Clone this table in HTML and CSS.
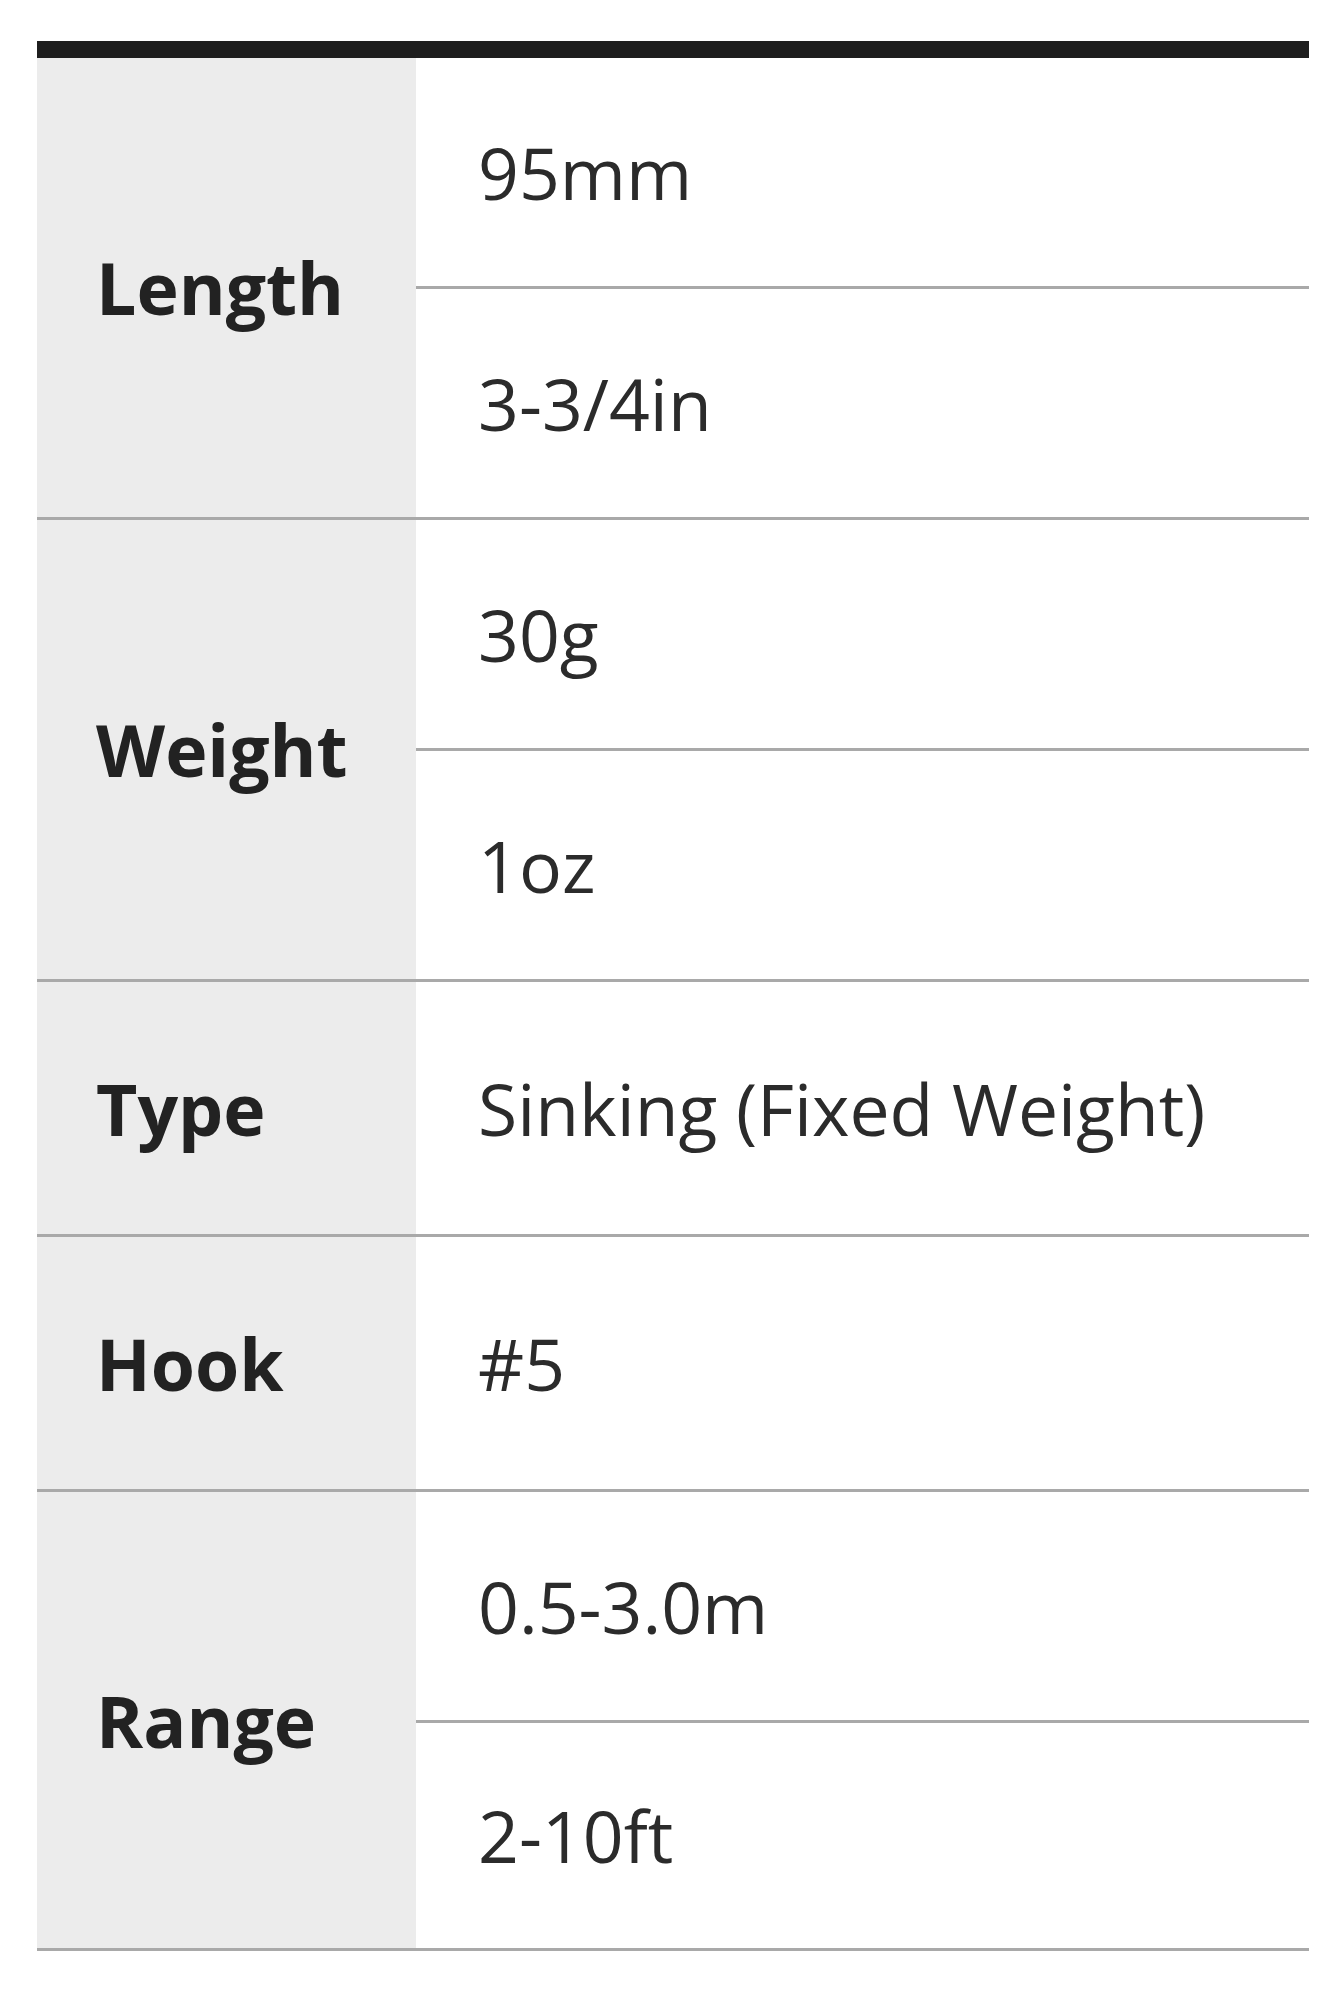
FILE: index.html
```html
<!DOCTYPE html>
<html>
<head>
<meta charset="utf-8">
<link rel="stylesheet" href="styles.css">
</head>
<body>
<div class="spec">
  <div class="spec-top"></div>
  <div class="group">
    <div class="label">Length</div>
    <div class="values">
      <div class="cell">95mm</div>
      <div class="cell">3-3/4in</div>
    </div>
  </div>
  <div class="group">
    <div class="label">Weight</div>
    <div class="values">
      <div class="cell">30g</div>
      <div class="cell">1oz</div>
    </div>
  </div>
  <div class="group">
    <div class="label">Type</div>
    <div class="values">
      <div class="cell single">Sinking (Fixed Weight)</div>
    </div>
  </div>
  <div class="group">
    <div class="label">Hook</div>
    <div class="values">
      <div class="cell single">#5</div>
    </div>
  </div>
  <div class="group">
    <div class="label">Range</div>
    <div class="values">
      <div class="cell">0.5-3.0m</div>
      <div class="cell last">2-10ft</div>
    </div>
  </div>
</div>
</body>
</html>
```
FILE: styles.css
```css
html, body {
  margin: 0;
  padding: 0;
  background: #ffffff;
}
body {
  font-family: "Open Sans", "Liberation Sans", sans-serif;
}
.spec {
  margin: 41px 0 0 37px;
  width: 1272px;
}
.spec-top {
  height: 17px;
  background: #1e1e1e;
}
.group {
  display: flex;
  border-bottom: 3px solid #a9a9a9;
}
.label {
  width: 379px;
  flex: none;
  box-sizing: border-box;
  background: #ececec;
  display: flex;
  align-items: center;
  padding-left: 59px;
  font-size: 71.5px;
  font-weight: 700;
  color: #222222;
}
.values {
  flex: 1;
  display: flex;
  flex-direction: column;
}
.cell {
  height: 228px;
  box-sizing: border-box;
  display: flex;
  align-items: center;
  padding-left: 62px;
  font-size: 71.5px;
  color: #2b2b2b;
}
.cell + .cell {
  border-top: 3px solid #a9a9a9;
  height: 231px;
}
.cell.single {
  height: 252px;
}
.cell.last {
  height: 228px;
}
```
